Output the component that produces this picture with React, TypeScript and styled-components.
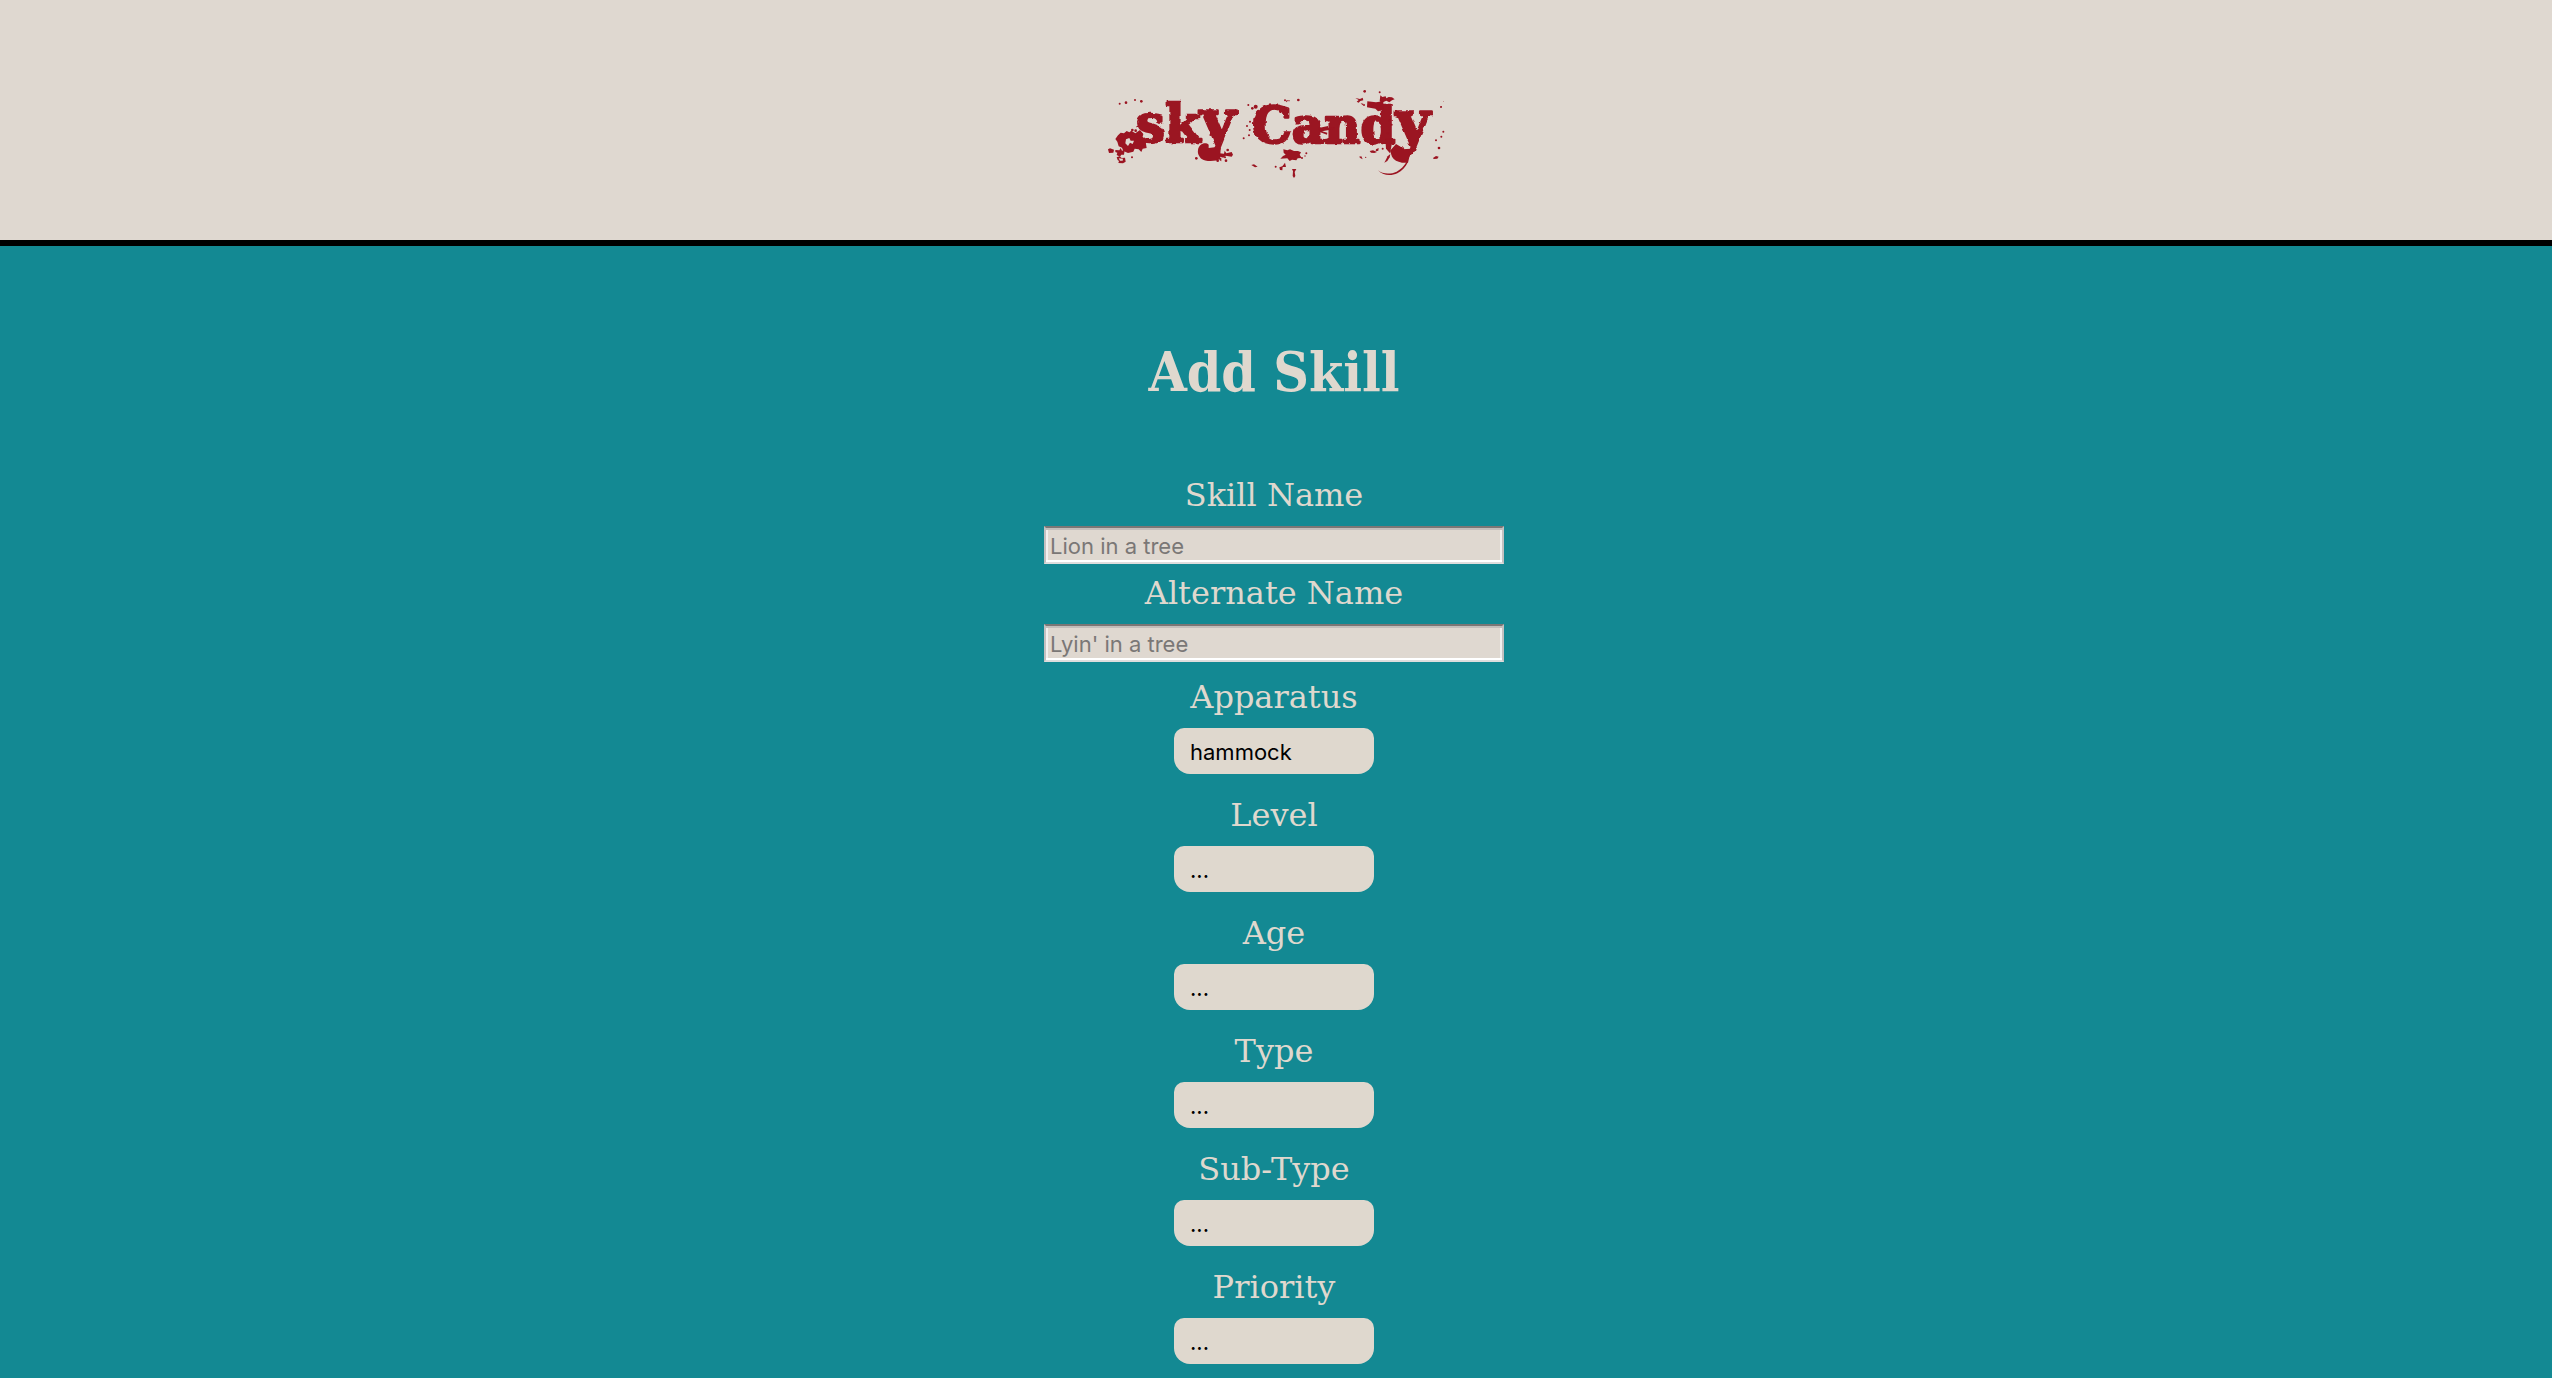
import React, { useId } from "react";
import styled, { createGlobalStyle } from "styled-components";

const sand = "#dfd8ce";
const teal = "#138993";
const red = "#9b1421";

const GlobalStyle = createGlobalStyle`
  *, *::before, *::after { box-sizing: border-box; }
  body {
    margin: 0;
    min-height: 100vh;
    background: ${teal};
    color: ${sand};
    font-family: "DejaVu Serif", "Liberation Serif", serif;
  }
`;

const Header = styled.header`
  display: flex;
  justify-content: center;
  padding: 86px 0 60px;
  background: #dfd8d0;
  border-bottom: 6px solid #000;
`;

const HomeLink = styled.a`
  display: block;
`;

const LogoArt = styled.svg`
  display: block;
  width: 344px;
  height: 94px;
  overflow: visible;
`;

const LogoText = styled.text<{ $size: number }>`
  font-family: "DejaVu Serif", serif;
  font-size: ${(p) => p.$size}px;
  font-weight: 700;
  fill: ${red};
  stroke: ${red};
  stroke-width: 7px;
  stroke-linejoin: round;
`;

const BigLetter = styled.tspan<{ $size: number }>`
  font-size: ${(p) => p.$size}px;
`;

const Main = styled.main`
  display: flex;
  flex-direction: column;
  align-items: center;
  padding: 94px 4px 0 0;
`;

const Title = styled.h1`
  margin: 0 0 70px;
  font-family: "DejaVu Serif Condensed", "DejaVu Serif", serif;
  font-size: 55px;
  line-height: 64px;
  font-weight: 700;
`;

const Form = styled.form`
  display: flex;
  flex-direction: column;
  align-items: center;
  gap: 14px;
`;

const FieldGroup = styled.div<{ $gap: number }>`
  display: flex;
  flex-direction: column;
  align-items: center;
  gap: ${(p) => p.$gap}px;
`;

const Field = styled.div`
  display: flex;
  flex-direction: column;
  align-items: center;
  gap: 10px;
`;

const Label = styled.label`
  font-size: 32px;
  line-height: 42px;
`;

const TextInput = styled.input`
  width: 460px;
  max-width: 100vw;
  height: 38px;
  padding: 2px 4px 0;
  border: 2px solid;
  border-color: #7b7776 #c3c0c0 #dedddd #c3c0c0;
  border-radius: 0;
  background: #dfd8d0;
  box-shadow: inset 0 2px #c3bebb, inset 0 -2px #fff, inset 2px 0 #f1efee,
    inset -2px 0 #f1efee;
  color: #000;
  font-family: Inter, sans-serif;
  font-size: 22px;
  &::placeholder {
    color: #7a7776;
    opacity: 1;
  }
`;

const Select = styled.select`
  appearance: none;
  width: 200px;
  height: 46px;
  padding: 1px 16px 0;
  border: 0;
  border-radius: 10px 10px 16px 16px;
  background: ${sand};
  color: #000;
  font-family: Inter, sans-serif;
  font-size: 22px;
`;

const specks: [number, number, number][] = [
  [89, 101, 3], [108, 98, 4], [135, 90, 3], [154, 94, 4], [127, 180, 4], [137, 182, 4],
  [126, 262, 3], [319, 265, 4], [383, 272, 4], [408, 272, 4], [405, 262, 3], [413, 240, 4],
  [475, 105, 3], [497, 110, 6], [487, 115, 4], [480, 155, 3], [471, 168, 3], [479, 180, 3],
  [477, 196, 3], [461, 205, 3], [625, 90, 4], [585, 91, 3], [597, 92, 2], [557, 290, 3],
  [649, 250, 3], [645, 258, 2], [636, 264, 3], [824, 64, 4], [869, 67, 3], [900, 151, 4],
  [905, 164, 3], [893, 190, 3], [822, 105, 3], [827, 262, 2], [1053, 111, 3], [1060, 185, 3],
  [1054, 200, 3], [1038, 211, 3], [1047, 234, 4], [1061, 95, 1], [878, 236, 3],
];

const splashes = [
  "M84 196l8-8 10 2 8-7 8 4 6-5 12 8 14-10 10 12-4 16 12 14 2 12-12 2-4 10-8-8-12-2-4 9-16 4-14-6-4-10-10-4-4-14-6-8zM108 208l-2 12 8 8 6-10 8 4 4-10-10 0-4-8z",
  "M54 238l6-3 12 4-2 9-13 1z",
  "M76 240l12 1 4-7 4 8 8-2-2 14-8 0-4 6-10-5 2-7-6-2z",
  "M80 262l9-3 6 5 10-1 2 12-8 5-14-1 2-6-4-3zM86 265l4 7 8 0 1-6z",
  "M388 250l14 1 2-9 5 8 16-4 4 8-4 6-18-3-7 6-10-3z",
  "M386 262l8 2 0 10-5-3z",
  "M484 285l8-2 11 7-8 2z",
  "M587 92l8-2-5 7z",
  "M580 238l12 3 8-3 12 5 12 0 9 4-4 7 6 10-12 1-4 6-13-2-7 4-7-8-21 1 8-8 8-4-6-6z",
  "M568 292l9-3 8-11 3 13-10 0-1 10-7-1z",
  "M606 297l13 0-5 9 2 12-4 6-4-6 1-14z",
  "M796 84l14 3 8-4 2 8-9 2-5 5-6-3 6-5z",
  "M812 100l8 1-2 5z",
  "M871 76l6 5 10-2 2 6 7-4 10 1 8 6-8 3-8 6-9-5-14 6-6-4z",
  "M807 260l7-1 4 9-6-3z",
  "M839 243l10-2 12 5-8 3-10-1z",
  "M858 238l8-4-1 8-8 2z",
  "M883 278l10-19 8-7-2 10-7 11z",
  "M1029 264l9-6 8 2-4 6-11 1z",
  "M1051 110l5-2-2 4z",
  "M886 206l18 0 2 14-6 30-12-14z",
  "M686 174l28-6 0 5 20-2 0 6-38 7 16 4-1 6-22-8z",
  "M864 301c12 16 40 18 58 9 14-7 24-18 32-34l-4-1c-9 14-18 23-30 30-18 8-42 8-56-4z",
  "M324 240c2-18 22-26 32-16l0 10 18-2 18 6-2 28c-8 8-44 10-56 0-6-6-12-14-10-26z",
  "M900 242l18-20 14 8 4 8 28-2-10 42-18 0c-14-3-24-8-30-18z",
  "M832 94l26 3 22-3 0 26-16 4-8-8-25-4z",
];

function SkyCandyLogo() {
  const id = useId();
  const roughId = id + "rough";
  return (
    <LogoArt viewBox="42 48 1032 282" role="img" aria-label="sky Candy">
      <defs>
        <filter id={roughId} x="-5%" y="-20%" width="110%" height="140%">
          <feTurbulence type="fractalNoise" baseFrequency="0.06" numOctaves={2} seed={4} result="noise" />
          <feDisplacementMap in="SourceGraphic" in2="noise" scale={10} xChannelSelector="R" yChannelSelector="G" />
        </filter>
      </defs>
      <g filter={`url(#${roughId})`}>
        <LogoText x={138} y={216} $size={154}>
          sk<BigLetter $size={180}>y</BigLetter>
        </LogoText>
        <LogoText x={486} y={220} $size={150}>
          Cand<BigLetter $size={180}>y</BigLetter>
        </LogoText>
      </g>
      <g fill={red}>
        {splashes.map((d) => (
          <path key={d} d={d} fillRule="evenodd" />
        ))}
        {specks.map(([cx, cy, r]) => (
          <circle key={`${cx}-${cy}`} cx={cx} cy={cy} r={r} />
        ))}
      </g>
    </LogoArt>
  );
}

const textFields = [
  { id: "name", label: "Skill Name", placeholder: "Lion in a tree" },
  { id: "alternate", label: "Alternate Name", placeholder: "Lyin' in a tree" },
];

const selectFields = [
  { id: "apparatus", label: "Apparatus", value: "hammock" },
  { id: "level", label: "Level", value: "..." },
  { id: "age", label: "Age", value: "..." },
  { id: "type", label: "Type", value: "..." },
  { id: "subtype", label: "Sub-Type", value: "..." },
  { id: "priority", label: "Priority", value: "..." },
];

export default function App() {
  return (
    <>
      <GlobalStyle />
      <Header>
        <HomeLink href="#">
          <SkyCandyLogo />
        </HomeLink>
      </Header>
      <Main>
        <Title>Add Skill</Title>
        <Form>
          <FieldGroup $gap={8}>
            {textFields.map((f) => (
              <Field key={f.id}>
                <Label htmlFor={f.id}>{f.label}</Label>
                <TextInput id={f.id} type="text" placeholder={f.placeholder} />
              </Field>
            ))}
          </FieldGroup>
          <FieldGroup $gap={20}>
            {selectFields.map((f) => (
              <Field key={f.id}>
                <Label htmlFor={f.id}>{f.label}</Label>
                <Select id={f.id} defaultValue={f.value}>
                  <option value={f.value}>{f.value}</option>
                </Select>
              </Field>
            ))}
          </FieldGroup>
        </Form>
      </Main>
    </>
  );
}
